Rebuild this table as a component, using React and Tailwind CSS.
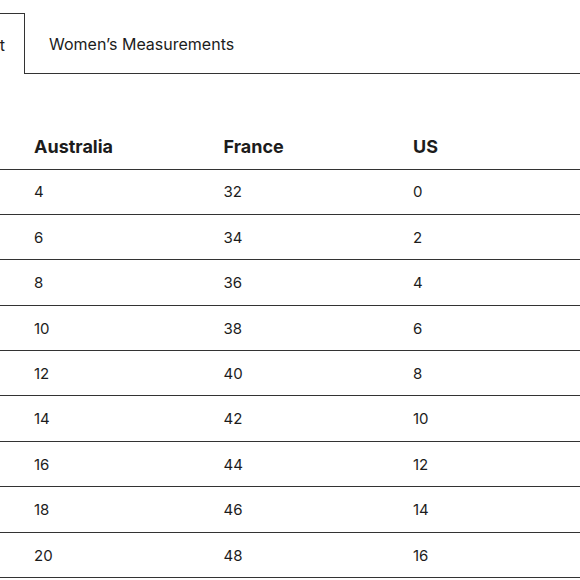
import React from 'react';

const rows = [
  ['6', '4', '32', '0'],
  ['8', '6', '34', '2'],
  ['10', '8', '36', '4'],
  ['12', '10', '38', '6'],
  ['14', '12', '40', '8'],
  ['16', '14', '42', '10'],
  ['18', '16', '44', '12'],
  ['20', '18', '46', '14'],
  ['22', '20', '48', '16'],
];

const headers = ['UK', 'Australia', 'France', 'US'];

const App = () => {
  return (
    <div className="w-[580px] h-[580px] overflow-hidden bg-white text-[#1c1c1c]" style={{ fontFamily: 'Inter, "Noto Sans", sans-serif' }}>
      <div className="pt-[13px] flex">
        <div className="w-[25px] shrink-0 flex justify-end">
          <div className="shrink-0 h-[61px] flex items-center pt-[1px] pl-6 pr-[19px] border-l border-t border-r border-[#333] text-[16px]">
            Size Chart
          </div>
        </div>
        <div className="flex-1 h-[61px] flex items-end">
          <div className="w-full h-full flex items-center pt-[1px] border-b border-[#333]">
            <button className="px-6 text-[16px]">Women’s Measurements</button>
          </div>
        </div>
      </div>

      <table className="mt-[50px] -ml-[165.5px] w-[758px] table-fixed border-collapse">
        <thead>
          <tr className="h-[45px] border-b border-[#333]">
            {headers.map((h) => (
              <th key={h} className="text-left font-bold text-[18px] pl-[10px] pt-[1px] align-middle">{h}</th>
            ))}
          </tr>
        </thead>
        <tbody>
          {rows.map((r, i) => (
            <tr key={i} className="h-[45.4px] border-b border-[#333]">
              {r.map((c, j) => (
                <td key={j} className="pl-[10px] pt-[2px] text-[15px] align-middle">{c}</td>
              ))}
            </tr>
          ))}
        </tbody>
      </table>
    </div>
  );
};

export default App;
